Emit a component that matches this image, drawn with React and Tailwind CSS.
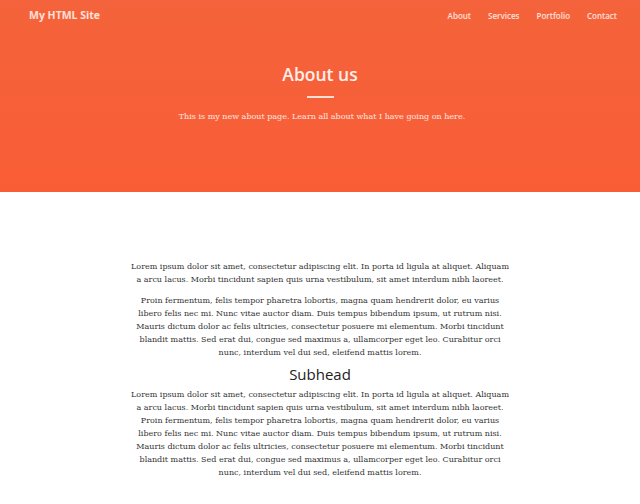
export default function App() {
  const serif = { fontFamily: '"DejaVu Serif", "Liberation Serif", serif' };
  const sans = { fontFamily: '"Open Sans", "Noto Sans", sans-serif' };
  return (
    <div className="w-[640px] min-h-[504px] bg-white">
      <header className="h-[192px] bg-gradient-to-b from-[#f4633b] to-[#f95d36] flex flex-col">
        <nav className="h-[32px] flex items-center justify-between pl-[29px] pr-[23px]" style={sans}>
          <span className="text-[10.5px] font-bold text-white/80">My HTML Site</span>
          <ul className="flex gap-[17px] text-[8px] font-semibold text-white/80">
            <li>About</li>
            <li>Services</li>
            <li>Portfolio</li>
            <li>Contact</li>
          </ul>
        </nav>
        <div className="flex flex-col items-center pt-[30px]">
          <h1 className="text-[17.5px] leading-[24px] font-semibold text-white/90" style={sans}>About us</h1>
          <div className="w-[27px] h-[2px] bg-white/80 mt-[10px]"></div>
          <p className="mt-[13px] ml-[4px] text-[8px] leading-[12px] text-white/85" style={serif}>
            This is my new about page. Learn all about what I have going on here.
          </p>
        </div>
      </header>
      <main className="w-[383px] mx-auto text-center pt-[68px] text-[#333] text-[8px] leading-[13px]" style={serif}>
        <p>
          Lorem ipsum dolor sit amet, consectetur adipiscing elit. In porta id ligula at aliquet. Aliquam a arcu lacus. Morbi tincidunt sapien quis urna vestibulum, sit amet interdum nibh laoreet.
        </p>
        <p className="mt-[8px]">
          Proin fermentum, felis tempor pharetra lobortis, magna quam hendrerit dolor, eu varius libero felis nec mi. Nunc vitae auctor diam. Duis tempus bibendum ipsum, ut rutrum nisi. Mauris dictum dolor ac felis ultricies, consectetur posuere mi elementum. Morbi tincidunt blandit mattis. Sed erat dui, congue sed maximus a, ullamcorper eget leo. Curabitur orci nunc, interdum vel dui sed, eleifend mattis lorem.
        </p>
        <h2 className="mt-[5px] mb-[4px] text-[15px] leading-[20px] font-medium text-[#222]" style={sans}>Subhead</h2>
        <p>
          Lorem ipsum dolor sit amet, consectetur adipiscing elit. In porta id ligula at aliquet. Aliquam a arcu lacus. Morbi tincidunt sapien quis urna vestibulum, sit amet interdum nibh laoreet.
        </p>
        <p>
          Proin fermentum, felis tempor pharetra lobortis, magna quam hendrerit dolor, eu varius libero felis nec mi. Nunc vitae auctor diam. Duis tempus bibendum ipsum, ut rutrum nisi. Mauris dictum dolor ac felis ultricies, consectetur posuere mi elementum. Morbi tincidunt blandit mattis. Sed erat dui, congue sed maximus a, ullamcorper eget leo. Curabitur orci nunc, interdum vel dui sed, eleifend mattis lorem.
        </p>
      </main>
    </div>
  );
}
